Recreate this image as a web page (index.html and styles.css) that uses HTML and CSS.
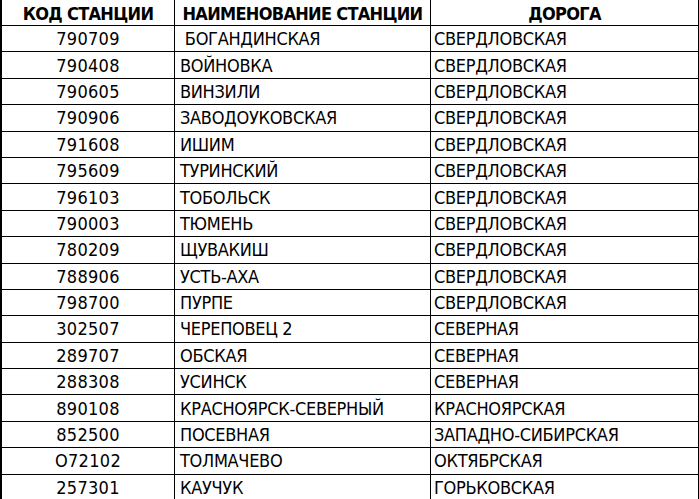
FILE: index.html
```html
<!DOCTYPE html>
<html lang="ru">
<head>
<meta charset="utf-8">
<link rel="stylesheet" href="styles.css">
</head>
<body>
<table class="tbl">
<thead>
<tr><th class="c1">КОД СТАНЦИИ</th><th class="c2">НАИМЕНОВАНИЕ СТАНЦИИ</th><th class="c3">ДОРОГА</th></tr>
</thead>
<tbody>
<tr><td class="code">790709</td><td class="name"> БОГАНДИНСКАЯ</td><td class="road">СВЕРДЛОВСКАЯ</td></tr>
<tr><td class="code">790408</td><td class="name">ВОЙНОВКА</td><td class="road">СВЕРДЛОВСКАЯ</td></tr>
<tr><td class="code">790605</td><td class="name">ВИНЗИЛИ</td><td class="road">СВЕРДЛОВСКАЯ</td></tr>
<tr><td class="code">790906</td><td class="name">ЗАВОДОУКОВСКАЯ</td><td class="road">СВЕРДЛОВСКАЯ</td></tr>
<tr><td class="code">791608</td><td class="name">ИШИМ</td><td class="road">СВЕРДЛОВСКАЯ</td></tr>
<tr><td class="code">795609</td><td class="name">ТУРИНСКИЙ</td><td class="road">СВЕРДЛОВСКАЯ</td></tr>
<tr><td class="code">796103</td><td class="name">ТОБОЛЬСК</td><td class="road">СВЕРДЛОВСКАЯ</td></tr>
<tr><td class="code">790003</td><td class="name">ТЮМЕНЬ</td><td class="road">СВЕРДЛОВСКАЯ</td></tr>
<tr><td class="code">780209</td><td class="name">ЩУВАКИШ</td><td class="road">СВЕРДЛОВСКАЯ</td></tr>
<tr><td class="code">788906</td><td class="name">УСТЬ-АХА</td><td class="road">СВЕРДЛОВСКАЯ</td></tr>
<tr><td class="code">798700</td><td class="name">ПУРПЕ</td><td class="road">СВЕРДЛОВСКАЯ</td></tr>
<tr><td class="code">302507</td><td class="name">ЧЕРЕПОВЕЦ 2</td><td class="road">СЕВЕРНАЯ</td></tr>
<tr><td class="code">289707</td><td class="name">ОБСКАЯ</td><td class="road">СЕВЕРНАЯ</td></tr>
<tr><td class="code">288308</td><td class="name">УСИНСК</td><td class="road">СЕВЕРНАЯ</td></tr>
<tr><td class="code">890108</td><td class="name">КРАСНОЯРСК-СЕВЕРНЫЙ</td><td class="road">КРАСНОЯРСКАЯ</td></tr>
<tr><td class="code">852500</td><td class="name">ПОСЕВНАЯ</td><td class="road">ЗАПАДНО-СИБИРСКАЯ</td></tr>
<tr><td class="code">O72102</td><td class="name">ТОЛМАЧЕВО</td><td class="road">ОКТЯБРСКАЯ</td></tr>
<tr><td class="code">257301</td><td class="name">КАУЧУК</td><td class="road">ГОРЬКОВСКАЯ</td></tr>
</tbody>
</table>
</body>
</html>
```
FILE: styles.css
```css
html, body {
  margin: 0;
  padding: 0;
  background: #fff;
}
.tbl {
  border-collapse: collapse;
  width: 699px;
  table-layout: fixed;
  font-family: "DejaVu Sans Condensed", "DejaVu Sans", sans-serif;
  font-size: 18px;
  color: #000;
}
.tbl th, .tbl td {
  border: 1px solid #000;
  padding: 1px 0 0 0;
  height: 24.4px;
  line-height: 20px;
  white-space: pre;
  overflow: hidden;
}
.tbl thead th {
  border-top: none;
  height: 22px;
  padding-top: 3px;
  font-weight: bold;
  letter-spacing: -0.7px;
  text-align: center;
}
.tbl tr > :first-child {
  border-left: 2px solid #000;
}
.c1 { width: 172px; }
.c2 { width: 255px; }
.tbl td.code {
  text-align: center;
  letter-spacing: 0.3px;
}
.tbl td.name {
  text-align: left;
  padding-left: 5px;
  letter-spacing: -0.3px;
}
.tbl td.road {
  text-align: left;
  padding-left: 3px;
  letter-spacing: -0.3px;
}
```
